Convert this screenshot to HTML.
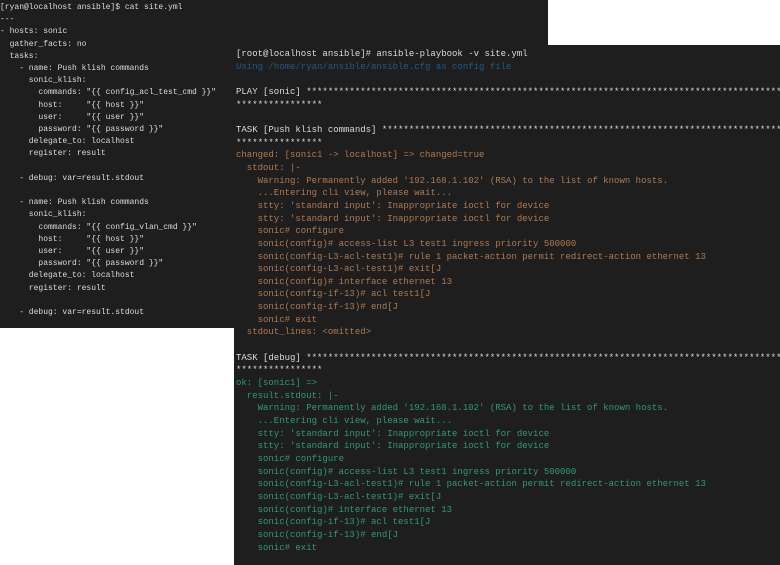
<!DOCTYPE html>
<html><head><style>
body{margin:0;width:780px;height:562px;background:#fff;position:relative;overflow:hidden}
.t{position:absolute;background:#1e1e1e;overflow:hidden;font-family:"Liberation Mono",monospace;white-space:pre}
#a{left:0;top:0;width:548px;height:328px;font-size:8px;line-height:12.2px;color:#dcdcdc;padding:2px 0 0 0;box-sizing:border-box}
#b{left:234px;top:45px;width:546px;height:517px;font-size:9px;line-height:12.65px;color:#dcdcdc;padding-top:3px}
#b div{padding-left:2px}
.u{color:#1f5a8a}.o{color:#b07a50}.g{color:#2e9a78}
</style></head><body>
<div class="t" id="a">[ryan@localhost ansible]$ cat site.yml
---
- hosts: sonic
  gather_facts: no
  tasks:
    - name: Push klish commands
      sonic_klish:
        commands: "{{ config_acl_test_cmd }}"
        host:     "{{ host }}"
        user:     "{{ user }}"
        password: "{{ password }}"
      delegate_to: localhost
      register: result

    - debug: var=result.stdout

    - name: Push klish commands
      sonic_klish:
        commands: "{{ config_vlan_cmd }}"
        host:     "{{ host }}"
        user:     "{{ user }}"
        password: "{{ password }}"
      delegate_to: localhost
      register: result

    - debug: var=result.stdout</div>
<div class="t" id="b"><div>[root@localhost ansible]# ansible-playbook -v site.yml
<span class="u">Using /home/ryan/ansible/ansible.cfg as config file</span>

PLAY [sonic] ****************************************************************************************************
****************

TASK [Push klish commands] **************************************************************************************
****************
<span class="o">changed: [sonic1 -> localhost] => changed=true
  stdout: |-
    Warning: Permanently added '192.168.1.102' (RSA) to the list of known hosts.
    ...Entering cli view, please wait...
    stty: 'standard input': Inappropriate ioctl for device
    stty: 'standard input': Inappropriate ioctl for device
    sonic# configure
    sonic(config)# access-list L3 test1 ingress priority 500000
    sonic(config-L3-acl-test1)# rule 1 packet-action permit redirect-action ethernet 13
    sonic(config-L3-acl-test1)# exit[J
    sonic(config)# interface ethernet 13
    sonic(config-if-13)# acl test1[J
    sonic(config-if-13)# end[J
    sonic# exit
  stdout_lines: &lt;omitted&gt;</span>

TASK [debug] ****************************************************************************************************
****************
<span class="g">ok: [sonic1] =>
  result.stdout: |-
    Warning: Permanently added '192.168.1.102' (RSA) to the list of known hosts.
    ...Entering cli view, please wait...
    stty: 'standard input': Inappropriate ioctl for device
    stty: 'standard input': Inappropriate ioctl for device
    sonic# configure
    sonic(config)# access-list L3 test1 ingress priority 500000
    sonic(config-L3-acl-test1)# rule 1 packet-action permit redirect-action ethernet 13
    sonic(config-L3-acl-test1)# exit[J
    sonic(config)# interface ethernet 13
    sonic(config-if-13)# acl test1[J
    sonic(config-if-13)# end[J
    sonic# exit</span></div></div>
</body></html>
